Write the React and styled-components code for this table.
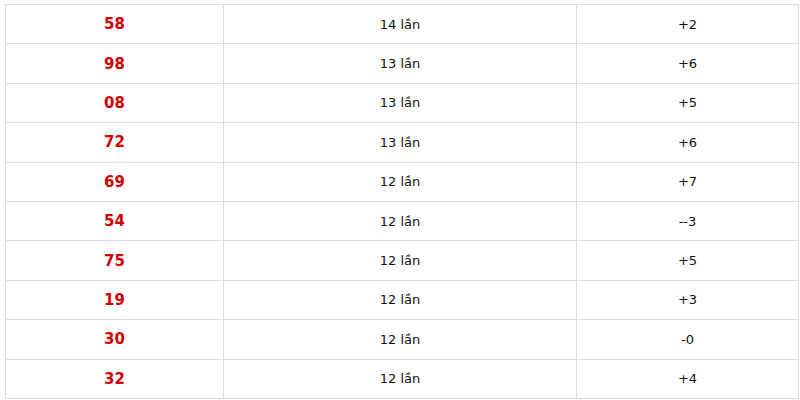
import React from 'react';
import styled, { createGlobalStyle } from 'styled-components';

const GlobalStyle = createGlobalStyle`
  html, body {
    margin: 0;
    padding: 0;
    background: #fff;
  }
  body {
    font-family: "DejaVu Sans", Verdana, sans-serif;
  }
`;

const rows = [
  { num: '58', times: '14 lần', diff: '+2' },
  { num: '98', times: '13 lần', diff: '+6' },
  { num: '08', times: '13 lần', diff: '+5' },
  { num: '72', times: '13 lần', diff: '+6' },
  { num: '69', times: '12 lần', diff: '+7' },
  { num: '54', times: '12 lần', diff: '--3' },
  { num: '75', times: '12 lần', diff: '+5' },
  { num: '19', times: '12 lần', diff: '+3' },
  { num: '30', times: '12 lần', diff: '-0' },
  { num: '32', times: '12 lần', diff: '+4' },
];

const Wrap = styled.div`
  padding: 4px 2px 0 5px;
`;

const Table = styled.table`
  width: 793px;
  border-collapse: collapse;
  table-layout: fixed;
  border: 1px solid #dddddd;
`;

const Row = styled.tr`
  height: 39.4px;
`;

const Cell = styled.td`
  border: 1px solid #dddddd;
  text-align: center;
  vertical-align: middle;
  padding: 0;
  font-size: ${(p) => (p.$hot ? '15px' : '13px')};
  font-weight: ${(p) => (p.$hot ? 700 : 400)};
  color: ${(p) => (p.$hot ? '#d40000' : '#111')};
`;

export default function App() {
  return (
    <>
      <GlobalStyle />
      <Wrap>
        <Table>
          <colgroup>
            <col style={{ width: 218 }} />
            <col style={{ width: 353 }} />
            <col style={{ width: 222 }} />
          </colgroup>
          <tbody>
            {rows.map((r) => (
              <Row key={r.num}>
                <Cell $hot>{r.num}</Cell>
                <Cell>{r.times}</Cell>
                <Cell>{r.diff}</Cell>
              </Row>
            ))}
          </tbody>
        </Table>
      </Wrap>
    </>
  );
}
